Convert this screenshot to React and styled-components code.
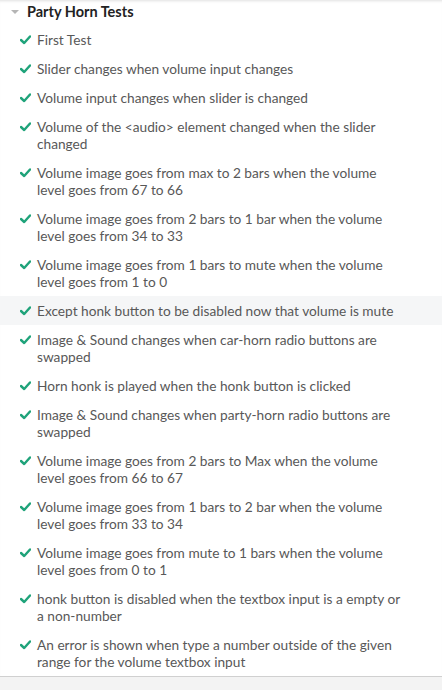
import React from 'react';
import styled, { createGlobalStyle } from 'styled-components';

const GlobalStyle = createGlobalStyle`
  html, body {
    margin: 0;
    padding: 0;
    background: #f3f3f3;
  }
  body {
    font-family: 'Lato', 'Noto Sans', sans-serif;
  }
`;

const Panel = styled.div`
  background: #fff;
  border-bottom: 1px solid #d0d0d0;
  box-shadow: inset 0 3px 3px -2px rgba(0, 0, 0, 0.12);
`;

const Header = styled.div`
  display: flex;
  align-items: center;
  height: 23px;
  padding: 0 0 2px 11px;
  gap: 8px;
`;

const Caret = styled.span`
  width: 0;
  height: 0;
  border-left: 4px solid transparent;
  border-right: 4px solid transparent;
  border-top: 4px solid #b5b5b5;
`;

const Title = styled.span`
  font-size: 14.5px;
  font-weight: 700;
  color: #222;
`;

const List = styled.ul`
  list-style: none;
  margin: 0;
  padding: 0;
`;

const Item = styled.li`
  display: flex;
  align-items: flex-start;
  gap: 6px;
  padding: 6px 40px 6px 20px;
  line-height: 17px;
  font-size: 13.7px;
  color: #585858;
  background: ${(p) => (p.$active ? '#f5f6f7' : 'transparent')};
`;

const Check = styled.svg`
  flex: none;
  width: 11px;
  height: 17px;
`;

const tests = [
  'First Test',
  'Slider changes when volume input changes',
  'Volume input changes when slider is changed',
  'Volume of the <audio> element changed when the slider changed',
  'Volume image goes from max to 2 bars when the volume level goes from 67 to 66',
  'Volume image goes from 2 bars to 1 bar when the volume level goes from 34 to 33',
  'Volume image goes from 1 bars to mute when the volume level goes from 1 to 0',
  'Except honk button to be disabled now that volume is mute',
  'Image & Sound changes when car-horn radio buttons are swapped',
  'Horn honk is played when the honk button is clicked',
  'Image & Sound changes when party-horn radio buttons are swapped',
  'Volume image goes from 2 bars to Max when the volume level goes from 66 to 67',
  'Volume image goes from 1 bars to 2 bar when the volume level goes from 33 to 34',
  'Volume image goes from mute to 1 bars when the volume level goes from 0 to 1',
  'honk button is disabled when the textbox input is a empty or a non-number',
  'An error is shown when type a number outside of the given range for the volume textbox input',
];

const App = () => {
  return (
    <>
      <GlobalStyle />
      <Panel>
        <Header>
          <Caret />
          <Title>Party Horn Tests</Title>
        </Header>
        <List>
          {tests.map((t, i) => (
            <Item key={i} $active={i === 7}>
              <Check viewBox="0 0 11 17">
                <path d="M1 9 L4.2 12 L10 5.5" fill="none" stroke="#1fa37a" strokeWidth="2.4" strokeLinecap="round" strokeLinejoin="round" />
              </Check>
              <span>{t}</span>
            </Item>
          ))}
        </List>
      </Panel>
    </>
  );
};

export default App;
